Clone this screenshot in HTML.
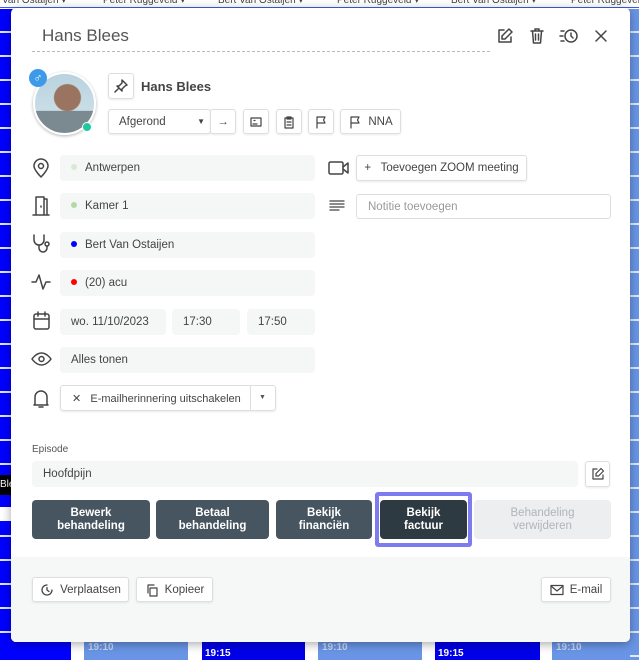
<!DOCTYPE html>
<html><head><meta charset="utf-8"><style>
*{box-sizing:border-box;margin:0;padding:0}
body{width:639px;height:660px;position:relative;overflow:hidden;background:#fff;font-family:"Liberation Sans",sans-serif;color:#333}
.a{position:absolute}
.hdr{top:0;left:0;width:639px;height:8px;background:#fff;border-bottom:1px solid #3a5ee0;font-size:10px;color:#444;white-space:nowrap;overflow:hidden}
.hn{position:absolute;top:-5px;font-size:10px;color:#444}
.lcol{left:0;top:9px;width:14px;height:651px;background:#0000ff;background-image:repeating-linear-gradient(to bottom,transparent 0 22px,#dfe6ff 22px 24px)}
.rcol{left:626px;top:9px;width:13px;height:651px;background:#6a95e6;background-image:repeating-linear-gradient(to bottom,transparent 0 22px,#e3eafa 22px 24px)}
.modal{left:11px;top:8px;width:619px;height:634px;background:#fff;border-radius:5px;box-shadow:0 2px 10px rgba(0,0,0,.35);overflow:hidden}
.f{position:absolute;background:#f5f6f6;border-radius:4px;height:26px;font-size:11.5px;color:#444;line-height:26px;padding-left:11px}
.dot{display:inline-block;width:6px;height:6px;border-radius:50%;margin-right:8px;vertical-align:1px}
.b{position:absolute;background:#fff;border:1px solid #dcdfe2;border-radius:3px;box-shadow:0 1px 2px rgba(0,0,0,.08);font-size:11.5px;color:#444;display:flex;align-items:center;justify-content:center}
.ic{position:absolute}
.db{position:absolute;top:500px;height:39px;background:#465560;color:#fff;border-radius:4px;font-size:11.5px;font-weight:bold;text-align:center;display:flex;align-items:center;justify-content:center;line-height:13px}
svg{fill:none;stroke:#444;stroke-width:1.5;stroke-linecap:round;stroke-linejoin:round}
</style></head><body>
<div class="a hdr">
<span class="hn" style="left:2px">Van Ostaijen ▾</span>
<span class="hn" style="left:103px">Peter Ruggeveld ▾</span>
<span class="hn" style="left:218px">Bert Van Ostaijen ▾</span>
<span class="hn" style="left:337px">Peter Ruggeveld ▾</span>
<span class="hn" style="left:451px">Bert Van Ostaijen ▾</span>
<span class="hn" style="left:571px">Peter Ruggeveld ▾</span>
</div>
<div class="a lcol"></div>
<div class="a" style="left:0;top:475px;width:14px;height:20px;background:#000;color:#fff;font-size:10px;line-height:20px">Ble</div>
<div class="a" style="left:0;top:507px;width:14px;height:14px;background:#fff"></div>
<div class="a rcol"></div>
<div class="a" style="left:84px;top:642px;width:104px;height:18px;background:#6a95e6;color:#c9d6f2;font-size:10px;font-weight:bold;padding-left:4px">19:10</div>
<div class="a" style="left:202px;top:642px;width:103px;height:18px;background:#0000e8;color:#fff;font-size:10px;font-weight:bold;padding:6px 0 0 3px">19:15</div>
<div class="a" style="left:318px;top:642px;width:104px;height:18px;background:#6a95e6;color:#c9d6f2;font-size:10px;font-weight:bold;padding-left:4px">19:10</div>
<div class="a" style="left:435px;top:642px;width:105px;height:18px;background:#0000e8;color:#fff;font-size:10px;font-weight:bold;padding:6px 0 0 3px">19:15</div>
<div class="a" style="left:552px;top:642px;width:78px;height:18px;background:#6a95e6;color:#c9d6f2;font-size:10px;font-weight:bold;padding-left:4px">19:10</div>
<div class="a" style="left:0;top:642px;width:71px;height:18px;background:#0000ff"></div>

<div class="a modal">
<div class="a" style="left:0;top:549px;width:619px;height:85px;background:#f6f7f7"></div>
</div>
<div class="a" style="left:42px;top:26px;font-size:17px;color:#555">Hans Blees</div>
<div class="a" style="left:32px;top:51px;width:458px;border-top:1px dashed #bbb"></div>
<svg class="ic" style="left:496px;top:27px" width="18" height="18" viewBox="0 0 18 18"><path d="M8 3H3v12h12v-5"/><path d="M13 2l3 3-7 7H6V9z"/></svg>
<svg class="ic" style="left:528px;top:27px" width="18" height="18" viewBox="0 0 18 18"><path d="M3 4h12M7 4V2h4v2M4.5 4l1 12h7l1-12M7.5 7v6M10.5 7v6"/></svg>
<svg class="ic" style="left:559px;top:27px" width="20" height="18" viewBox="0 0 20 18"><path d="M2 4h3M1 9h3M2 14h3"/><circle cx="12" cy="9" r="6"/><path d="M12 6v3l2 2"/></svg>
<svg class="ic" style="left:594px;top:29px" width="14" height="14" viewBox="0 0 14 14"><path d="M2 2l10 10M12 2L2 12"/></svg>

<div class="a" style="left:33px;top:72px;width:63px;height:63px;border-radius:50%;border:2px solid #fff;box-shadow:0 1px 3px rgba(0,0,0,.3);background:radial-gradient(circle at 55% 40%,#9a7460 0 13px,transparent 14px),linear-gradient(#b9d3df,#c9dde6 62%,#7a8a90 63%)"></div>
<div class="a" style="left:29px;top:69px;width:18px;height:18px;border-radius:50%;background:#3d9ae8;color:#fff;font-size:12px;text-align:center;line-height:18px">♂</div>
<div class="a" style="left:82px;top:122px;width:10px;height:10px;border-radius:50%;background:#1fc9a0;border:1px solid #fff"></div>

<div class="b" style="left:108px;top:73px;width:26px;height:26px"><svg width="14" height="14" viewBox="0 0 14 14"><path d="M8 1l5 5-2 1-3 3 0 2-5-5 2 0 3-3zM4 10l-3 3"/></svg></div>
<div class="a" style="left:141px;top:79px;font-size:13px;font-weight:bold;color:#444">Hans Blees</div>
<div class="b" style="left:108px;top:109px;width:103px;height:25px;justify-content:flex-start;padding-left:10px">Afgerond<span style="position:absolute;right:5px;font-size:8px">▼</span></div>
<div class="b" style="left:210px;top:109px;width:26px;height:25px">→</div>
<div class="b" style="left:243px;top:109px;width:26px;height:25px"><svg width="14" height="14" viewBox="0 0 14 14"><path d="M2 3h10v8H2zM4 9h4M5 5.5h1" stroke-width="1.2"/></svg></div>
<div class="b" style="left:276px;top:109px;width:26px;height:25px"><svg width="14" height="14" viewBox="0 0 14 14"><path d="M3 3h8v10H3zM5 2h4v2H5zM5 7h4M5 10h4" stroke-width="1.2"/></svg></div>
<div class="b" style="left:308px;top:109px;width:26px;height:25px"><svg width="14" height="14" viewBox="0 0 14 14"><path d="M3 13V2h8l-1.5 3L11 8H3" stroke-width="1.2"/></svg></div>
<div class="b" style="left:340px;top:109px;width:61px;height:25px"><svg width="14" height="14" viewBox="0 0 14 14" style="margin-right:6px"><path d="M3 13V2h8l-1.5 3L11 8H3" stroke-width="1.2"/></svg>NNA</div>

<svg class="ic" style="left:31px;top:157px" width="20" height="22" viewBox="0 0 20 22"><path d="M10 20s-7-7-7-11a7 7 0 0114 0c0 4-7 11-7 11z"/><circle cx="10" cy="9" r="2.5"/></svg>
<div class="f" style="left:60px;top:155px;width:255px"><span class="dot" style="background:#d9ead3"></span>Antwerpen</div>
<svg class="ic" style="left:32px;top:195px" width="18" height="22" viewBox="0 0 18 22"><path d="M1 20h16M4 20V2h8v18M12 4h3v16M9 11v1"/></svg>
<div class="f" style="left:60px;top:193px;width:255px"><span class="dot" style="background:#b6d7a8"></span>Kamer 1</div>
<svg class="ic" style="left:31px;top:233px" width="22" height="22" viewBox="0 0 22 22"><path d="M3 2v5a5 5 0 0010 0V2M8 12v3a4 4 0 008 0v-2"/><circle cx="16" cy="11" r="2"/></svg>
<div class="f" style="left:60px;top:232px;width:255px"><span class="dot" style="background:#0000ff"></span>Bert Van Ostaijen</div>
<svg class="ic" style="left:31px;top:272px" width="20" height="20" viewBox="0 0 20 20"><path d="M1 10h4l3-7 4 14 3-7h4"/></svg>
<div class="f" style="left:60px;top:270px;width:255px"><span class="dot" style="background:#f00"></span>(20) acu</div>
<svg class="ic" style="left:32px;top:311px" width="19" height="20" viewBox="0 0 19 20"><rect x="2" y="3" width="15" height="15" rx="2"/><path d="M2 8h15M6 1v4M13 1v4"/></svg>
<div class="f" style="left:60px;top:309px;width:106px">wo. 11/10/2023</div>
<div class="f" style="left:172px;top:309px;width:68px">17:30</div>
<div class="f" style="left:247px;top:309px;width:68px">17:50</div>
<svg class="ic" style="left:31px;top:351px" width="21" height="16" viewBox="0 0 21 16"><path d="M1 8s4-6 9.5-6S20 8 20 8s-4 6-9.5 6S1 8 1 8z"/><circle cx="10.5" cy="8" r="2.5"/></svg>
<div class="f" style="left:60px;top:347px;width:255px">Alles tonen</div>
<svg class="ic" style="left:32px;top:388px" width="18" height="22" viewBox="0 0 18 22"><path d="M3 16V9a6 6 0 0112 0v7l1 1H2zM7 19h4"/></svg>
<div class="b" style="left:60px;top:385px;width:216px;height:26px;justify-content:flex-start;padding-left:11px;font-size:11px">✕&nbsp;&nbsp;&nbsp;E-mailherinnering uitschakelen</div>
<div class="a" style="left:250px;top:386px;width:1px;height:24px;background:#dcdfe2"></div>
<div class="a" style="left:259px;top:394px;font-size:7px;color:#555">▼</div>

<svg class="ic" style="left:328px;top:160px" width="22" height="16" viewBox="0 0 22 16"><rect x="1" y="2" width="14" height="12" rx="1.5"/><path d="M15 7l5-4v10l-5-4"/></svg>
<div class="b" style="left:356px;top:155px;width:171px;height:26px">+&nbsp;&nbsp;&nbsp;Toevoegen ZOOM meeting</div>
<svg class="ic" style="left:329px;top:199px" width="16" height="14" viewBox="0 0 16 14"><path d="M1 2h14M1 5h14M1 8h14M1 11h9" stroke-width="1.3"/></svg>
<div class="b" style="left:356px;top:194px;width:255px;height:25px;justify-content:flex-start;padding-left:11px;color:#999;box-shadow:none">Notitie toevoegen</div>

<div class="a" style="left:32px;top:444px;font-size:10px;color:#555">Episode</div>
<div class="f" style="left:32px;top:461px;width:546px;padding-left:11px">Hoofdpijn</div>
<div class="b" style="left:585px;top:461px;width:25px;height:26px"><svg width="14" height="14" viewBox="0 0 14 14"><path d="M6 2H2v10h10V8M10 1.5l2.5 2.5-5 5H5V6.5z" stroke-width="1.2"/></svg></div>

<div class="db" style="left:32px;width:118px">Bewerk<br>behandeling</div>
<div class="db" style="left:156px;width:113px">Betaal<br>behandeling</div>
<div class="db" style="left:276px;width:96px">Bekijk<br>financiën</div>
<div class="a" style="left:375px;top:492px;width:97px;height:55px;border:4px solid #7c7cf0;border-radius:3px"></div>
<div class="db" style="left:380px;width:87px;top:500px;background:#2e3a42">Bekijk<br>factuur</div>
<div class="db" style="left:474px;width:137px;background:#eceeef;color:#b0b5b8;font-weight:normal">Behandeling<br>verwijderen</div>

<div class="b" style="left:32px;top:577px;width:97px;height:25px"><svg width="14" height="14" viewBox="0 0 14 14" style="margin-right:6px"><path d="M12 7A5 5 0 117 2M7 4.5V7l2 1.5" stroke-width="1.3"/></svg>Verplaatsen</div>
<div class="b" style="left:136px;top:577px;width:77px;height:25px"><svg width="14" height="14" viewBox="0 0 14 14" style="margin-right:6px"><path d="M5 5h7v8H5zM3 10V2h6" stroke-width="1.2"/></svg>Kopieer</div>
<div class="b" style="left:541px;top:577px;width:70px;height:25px"><svg width="14" height="12" viewBox="0 0 14 12" style="margin-right:6px"><rect x="1" y="1.5" width="12" height="9" stroke-width="1.2"/><path d="M1 2l6 5 6-5" stroke-width="1.2"/></svg>E-mail</div>
</body></html>
